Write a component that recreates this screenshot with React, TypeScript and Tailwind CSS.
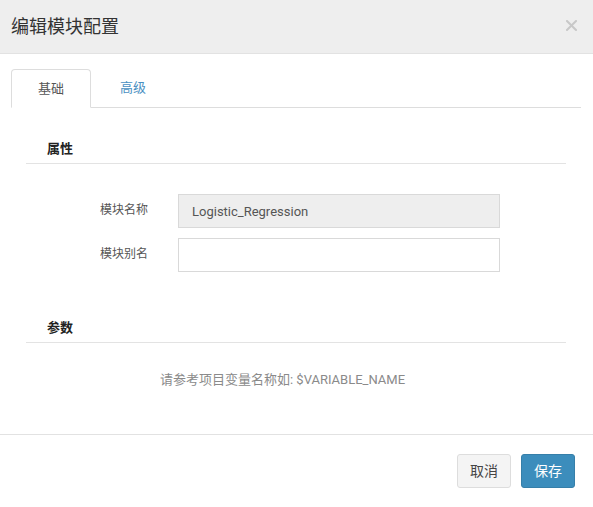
import { ReactNode } from "react";

const FONT = "font-['Roboto','Noto_Sans_CJK_SC',sans-serif]";

type SectionTitleProps = {
  children: ReactNode;
  top: string;
};

function SectionTitle({ children, top }: SectionTitleProps) {
  return (
    <div className={`${top} border-b border-[#e3e3e3] pb-[4px] pl-[21px] text-[13px] font-bold leading-[20px] text-[#222]`}>
      {children}
    </div>
  );
}

type FieldRowProps = {
  label: string;
  value?: string;
  disabled?: boolean;
};

function FieldRow({ label, value, disabled }: FieldRowProps) {
  return (
    <div className="flex items-start">
      <label className="w-[122px] pt-[6px] text-right text-[12px] leading-[20px] text-[#555]">{label}</label>
      <input
        type="text"
        defaultValue={value}
        disabled={disabled}
        className={`ml-[30px] h-[34px] w-[322px] border border-[#d9d9d9] px-[13px] text-[13px] text-[#555] outline-none ${
          disabled ? "bg-[#eeeeee]" : "bg-white"
        }`}
      />
    </div>
  );
}

export default function App() {
  return (
    <div className={`${FONT} w-[593px] h-[507px] bg-white`}>
      <div className="flex h-[54px] items-center justify-between border-b border-[#e2e2e2] bg-[#eeeeee] pl-[11px] pr-[16px]">
        <h4 className="text-[18px] leading-[24px] text-[#333]">编辑模块配置</h4>
        <button type="button" className="mt-[-2px] text-[#c8c8c8]">
          <svg width="11" height="11" viewBox="0 0 11 11">
            <path d="M1 1 L10 10 M10 1 L1 10" stroke="currentColor" strokeWidth="2" strokeLinecap="square" />
          </svg>
        </button>
      </div>

      <div className="border-b border-[#e2e2e2] pl-[11px] pr-[12px] pt-[15px] pb-[44px]">
        <div className="flex border-b border-[#dddddd]">
          <div className="mb-[-1px] flex h-[39px] w-[80px] items-center justify-center rounded-t-[4px] border border-b-white border-[#dddddd] bg-white text-[13px] text-[#555]">
            基础
          </div>
          <div className="ml-[2px] flex h-[38px] items-center px-[27px] text-[13px] text-[#4a90c2]">高级</div>
        </div>

        <div className="px-[15px]">
          <SectionTitle top="pt-[31px]">属性</SectionTitle>
          <div className="mt-[30px] flex flex-col gap-[10px]">
            <FieldRow label="模块名称" value="Logistic_Regression" disabled />
            <FieldRow label="模块别名" />
          </div>

          <SectionTitle top="pt-[46px]">参数</SectionTitle>
          <p className="mt-[27px] ml-[134px] text-[13px] leading-[20px] text-[#8a8a8a]">
            请参考项目变量名称如: $VARIABLE_NAME
          </p>
        </div>
      </div>

      <div className="flex justify-end gap-[10px] pr-[18px] pt-[19px]">
        <button
          type="button"
          className="h-[34px] w-[54px] rounded-[3px] border border-[#dddddd] bg-[#f4f4f4] text-[14px] text-[#444]"
        >
          取消
        </button>
        <button
          type="button"
          className="h-[34px] w-[54px] rounded-[3px] border border-[#367fa9] bg-[#3c8dbc] text-[14px] text-white"
        >
          保存
        </button>
      </div>
    </div>
  );
}
